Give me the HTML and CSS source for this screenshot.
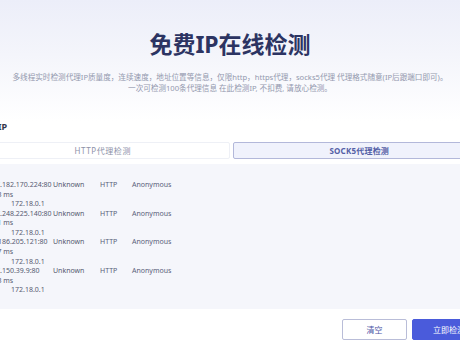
FILE: index.html
```html
<!DOCTYPE html>
<html lang="zh-CN">
<head>
<meta charset="utf-8">
<title>免费IP在线检测</title>
<link rel="stylesheet" href="styles.css">
</head>
<body>
<div class="hero">
  <h1 class="title">免费IP在线检测</h1>
  <p class="desc">多线程实时检测代理IP质量度，连续速度，地址位置等信息，仅限http，https代理，socks5代理 代理格式随意(IP后跟端口即可)。<br>一次可检测100条代理信息 在此检测IP, 不扣费, 请放心检测。</p>
</div>
<div class="main">
  <div class="section-title">检测IP</div>
  <div class="tabs">
    <div class="tab">HTTP代理检测</div>
    <div class="tab active">SOCK5代理检测</div>
  </div>
  <div class="results">
    <div class="entry">
      <div class="line"><span class="c-ip">47.182.170.224:80</span><span class="c-loc">Unknown</span><span class="c-type">HTTP</span><span class="c-anon">Anonymous</span></div>
      <div class="line speed">83 ms</div>
      <div class="line local">172.18.0.1</div>
    </div>
    <div class="entry">
      <div class="line"><span class="c-ip">47.248.225.140:80</span><span class="c-loc">Unknown</span><span class="c-type">HTTP</span><span class="c-anon">Anonymous</span></div>
      <div class="line speed">91 ms</div>
      <div class="line local">172.18.0.1</div>
    </div>
    <div class="entry">
      <div class="line"><span class="c-ip">8.186.205.121:80</span><span class="c-loc">Unknown</span><span class="c-type">HTTP</span><span class="c-anon">Anonymous</span></div>
      <div class="line speed">77 ms</div>
      <div class="line local">172.18.0.1</div>
    </div>
    <div class="entry">
      <div class="line"><span class="c-ip">47.150.39.9:80</span><span class="c-loc">Unknown</span><span class="c-type">HTTP</span><span class="c-anon">Anonymous</span></div>
      <div class="line speed">23 ms</div>
      <div class="line local">172.18.0.1</div>
    </div>
  </div>
  <div class="actions">
    <button class="btn btn-outline">清空</button>
    <button class="btn btn-primary">立即检测</button>
  </div>
</div>
</body>
</html>
```
FILE: styles.css
```css
html, body {
  margin: 0;
  padding: 0;
}
body {
  width: 460px;
  height: 350px;
  overflow: hidden;
  background: #ffffff;
  font-family: "Noto Sans", "Noto Sans CJK SC", sans-serif;
  color: #555a70;
}
.hero {
  background: linear-gradient(180deg, #eceef9 0%, #f4f5fb 45%, #ffffff 100%);
  padding-top: 29px;
  height: 92px;
  text-align: center;
}
.title {
  margin: 0;
  font-family: "Noto Sans", "Noto Sans CJK SC", sans-serif;
  font-size: 23px;
  line-height: 30px;
  font-weight: 700;
  letter-spacing: 0;
  color: #2c3462;
}
.desc {
  margin: 13px 0 0;
  font-size: 7.6px;
  line-height: 11px;
  color: #9398ae;
  white-space: nowrap;
}
.main {
  width: 510px;
  margin-left: calc(50% - 254px);
}
.section-title {
  padding-left: 4px;
  font-size: 9px;
  line-height: 12px;
  font-weight: 700;
  color: #33364a;
}
.tabs {
  display: flex;
  gap: 3px;
  margin-top: 9px;
}
.tab {
  flex: 1;
  height: 15px;
  line-height: 15px;
  text-align: center;
  font-size: 8px;
  letter-spacing: 0.6px;
  color: #8c91a8;
  background: #ffffff;
  border: 1px solid #eef0f6;
  border-radius: 2px;
}
.tab.active {
  background: #f0f2fc;
  border-color: #b3b8da;
  color: #5460a6;
  font-weight: 700;
  letter-spacing: 0.2px;
}
.results {
  margin-top: 5px;
  background: #f5f6fb;
  padding: 16px 0 14px 16px;
  height: 115px;
  font-size: 7px;
  line-height: 9.57px;
  color: #555a70;
}
.line {
  display: flex;
  white-space: nowrap;
}
.line.speed {
  padding-left: 1.5px;
}
.line.local {
  padding-left: 19px;
}
.c-ip {
  width: 61px;
  flex: none;
}
.c-loc {
  width: 47px;
  flex: none;
}
.c-type {
  width: 32px;
  flex: none;
  color: #5a5f7a;
}
.c-anon {
  color: #5a5f7a;
}
.actions {
  display: flex;
  justify-content: flex-end;
  gap: 5px;
  margin-top: 10px;
  padding-right: 0;
}
.btn {
  width: 65px;
  height: 21px;
  padding: 0;
  font-family: "Noto Sans", "Noto Sans CJK SC", sans-serif;
  font-size: 8px;
  border-radius: 2px;
  cursor: pointer;
}
.btn-outline {
  background: #ffffff;
  border: 1px solid #b9bdd8;
  color: #4c56a6;
}
.btn-primary {
  width: 74px;
  background: #4a5bdb;
  border: 1px solid #4a5bdb;
  color: #ffffff;
}
```
